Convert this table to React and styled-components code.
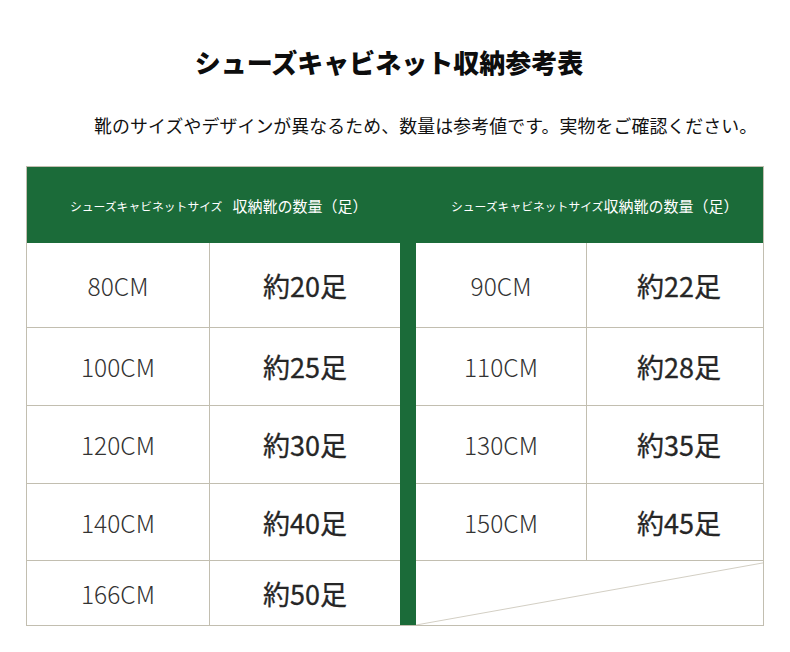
import React from 'react';
import styled, { createGlobalStyle } from 'styled-components';

const GlobalStyles = createGlobalStyle`
  :root {
    --green: #1b6b39;
    --line: #c2beb0;
    --ink: #2b2b2b;
  }
  * {
    margin: 0;
    padding: 0;
    box-sizing: border-box;
  }
  body {
    background: #fff;
    font-family: 'Noto Sans CJK JP', 'Noto Sans', sans-serif;
    color: var(--ink);
  }
`;

const Page = styled.div`
  width: 790px;
  height: 652px;
  padding-top: 44px;
`;

const Title = styled.h1`
  padding-right: 12px;
  text-align: center;
  font-size: 26px;
  line-height: 36px;
  font-weight: 900;
  color: #0d0d0d;
`;

const Note = styled.p`
  margin-top: 32px;
  padding-left: 94px;
  font-size: 17.9px;
  line-height: 26px;
  color: #111;
  white-space: nowrap;
  letter-spacing: 0.1px;
`;

const Table = styled.div`
  margin: 28px 0 0 26px;
  width: 738px;
  border: 1px solid var(--line);
`;

const Header = styled.div`
  height: 76px;
  background: var(--green);
  display: flex;
  align-items: center;
  color: #fff;
`;

const HeadGroup = styled.div`
  width: ${(p) => p.$width}px;
  padding-left: ${(p) => p.$pad}px;
  display: flex;
  align-items: center;
  gap: ${(p) => p.$gap}px;
  white-space: nowrap;
`;

const SmallLabel = styled.span`
  font-size: 11.8px;
  font-weight: 400;
`;

const BigLabel = styled.span`
  font-size: 15px;
  font-weight: 400;
`;

const Body = styled.div`
  display: flex;
`;

const Half = styled.div`
  display: grid;
  grid-template-columns: ${(p) => p.$cols};
  grid-template-rows: 85px 78px 78px 77px 64px;
`;

const Divider = styled.div`
  width: 16px;
  background: var(--green);
`;

const Cell = styled.div`
  display: flex;
  align-items: center;
  justify-content: center;
  padding-left: ${(p) => p.$shift || 0}px;
  border-bottom: ${(p) => (p.$last ? 'none' : '1px solid var(--line)')};
  border-right: ${(p) => (p.$label ? '1px solid var(--line)' : 'none')};
`;

const Size = styled.span`
  font-size: 24.5px;
  font-weight: 300;
  color: #333;
`;

const Count = styled.span`
  font-size: 27px;
  font-weight: 400;
  color: #262626;
  -webkit-text-stroke: 0.3px #262626;
`;

const EmptyCell = styled.div`
  grid-column: 1 / -1;
  position: relative;

  svg {
    position: absolute;
    inset: 0;
    width: 100%;
    height: 100%;
  }
`;

const left = [
  ['80CM', '約20足'],
  ['100CM', '約25足'],
  ['120CM', '約30足'],
  ['140CM', '約40足'],
  ['166CM', '約50足'],
];

const right = [
  ['90CM', '約22足'],
  ['110CM', '約28足'],
  ['130CM', '約35足'],
  ['150CM', '約45足'],
];

function Rows({ data, total, shift }) {
  return data.map(([size, count], i) => {
    const last = i === total - 1;
    return (
      <React.Fragment key={size}>
        <Cell $label $last={last}>
          <Size>{size}</Size>
        </Cell>
        <Cell $last={last} $shift={shift}>
          <Count>{count}</Count>
        </Cell>
      </React.Fragment>
    );
  });
}

export default function App() {
  return (
    <>
      <GlobalStyles />
      <Page>
        <Title>シューズキャビネット収納参考表</Title>
        <Note>靴のサイズやデザインが異なるため、数量は参考値です。実物をご確認ください。</Note>
        <Table>
          <Header>
            <HeadGroup $width={373} $pad={43} $gap={10}>
              <SmallLabel>シューズキャビネットサイズ</SmallLabel>
              <BigLabel>収納靴の数量（足）</BigLabel>
            </HeadGroup>
            <HeadGroup $width={363} $pad={51} $gap={-2}>
              <SmallLabel>シューズキャビネットサイズ</SmallLabel>
              <BigLabel>収納靴の数量（足）</BigLabel>
            </HeadGroup>
          </Header>
          <Body>
            <Half $cols="183px 190px">
              <Rows data={left} total={5} />
            </Half>
            <Divider />
            <Half $cols="171px 176px">
              <Rows data={right} total={5} shift={8} />
              <EmptyCell>
                <svg viewBox="0 0 100 100" preserveAspectRatio="none">
                  <line x1="0" y1="100" x2="100" y2="3" stroke="#d3cfc4" strokeWidth="1" vectorEffect="non-scaling-stroke" />
                </svg>
              </EmptyCell>
            </Half>
          </Body>
        </Table>
      </Page>
    </>
  );
}
